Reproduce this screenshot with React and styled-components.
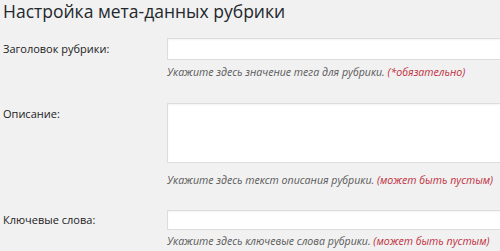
import React from 'react'
import styled, { createGlobalStyle } from 'styled-components'

const Global = createGlobalStyle`
  html, body {
    margin: 0;
    padding: 0;
    background: #f1f1f1;
    overflow: hidden;
  }
  body {
    font-family: "Open Sans", "Liberation Sans", sans-serif;
    color: #222;
  }
`

const Page = styled.div`
  width: 500px;
  height: 251px;
  padding-left: 3px;
  box-sizing: border-box;
  overflow: hidden;
`

const Title = styled.h2`
  margin: 0;
  font-size: 17.5px;
  line-height: 22px;
  font-weight: 400;
  color: #23282d;
  white-space: nowrap;
`

const Row = styled.div`
  display: grid;
  grid-template-columns: 164px 1fr;
  margin-top: ${p => p.$top}px;
`

const Label = styled.label`
  font-size: 11px;
  line-height: ${p => p.$line}px;
  padding-top: ${p => p.$pad || 0}px;
  color: #222;
  white-space: nowrap;
`

const Field = styled.div`
  display: flex;
  flex-direction: column;
  min-width: 0;
`

const Input = styled.input`
  display: block;
  width: 360px;
  height: ${p => p.$h}px;
  box-sizing: border-box;
  margin: 0;
  padding: 2px 6px;
  border: 1px solid #dddddd;
  background: #fff;
  box-shadow: inset 0 1px 2px rgba(0, 0, 0, 0.05);
  outline: none;
`

const Area = styled.textarea`
  display: block;
  width: 360px;
  height: 60px;
  box-sizing: border-box;
  margin: 0;
  padding: 2px 6px;
  border: 1px solid #dddddd;
  background: #fff;
  box-shadow: inset 0 1px 2px rgba(0, 0, 0, 0.05);
  resize: none;
  outline: none;
`

const Hint = styled.p`
  margin: ${p => p.$top}px 0 0;
  font-size: 10.6px;
  line-height: 18px;
  font-style: italic;
  color: #5a5a5a;
  white-space: nowrap;
`

const Note = styled.span`
  color: #c0303f;
`

export default function App() {
  return (
    <Page>
      <Global />
      <Title>Настройка мета-данных рубрики</Title>

      <Row $top={16}>
        <Label $line={22}>Заголовок рубрики:</Label>
        <Field>
          <Input $h={22} />
          <Hint $top={3}>
            Укажите здесь значение тега для рубрики. <Note>(*обязательно)</Note>
          </Hint>
        </Field>
      </Row>

      <Row $top={22}>
        <Label $line={18} $pad={2}>Описание:</Label>
        <Field>
          <Area />
          <Hint $top={8}>
            Укажите здесь текст описания рубрики. <Note>(может быть пустым)</Note>
          </Hint>
        </Field>
      </Row>

      <Row $top={21}>
        <Label $line={20}>Ключевые слова:</Label>
        <Field>
          <Input $h={20} />
          <Hint $top={2}>
            Укажите здесь ключевые слова рубрики. <Note>(может быть пустым)</Note>
          </Hint>
        </Field>
      </Row>
    </Page>
  )
}
